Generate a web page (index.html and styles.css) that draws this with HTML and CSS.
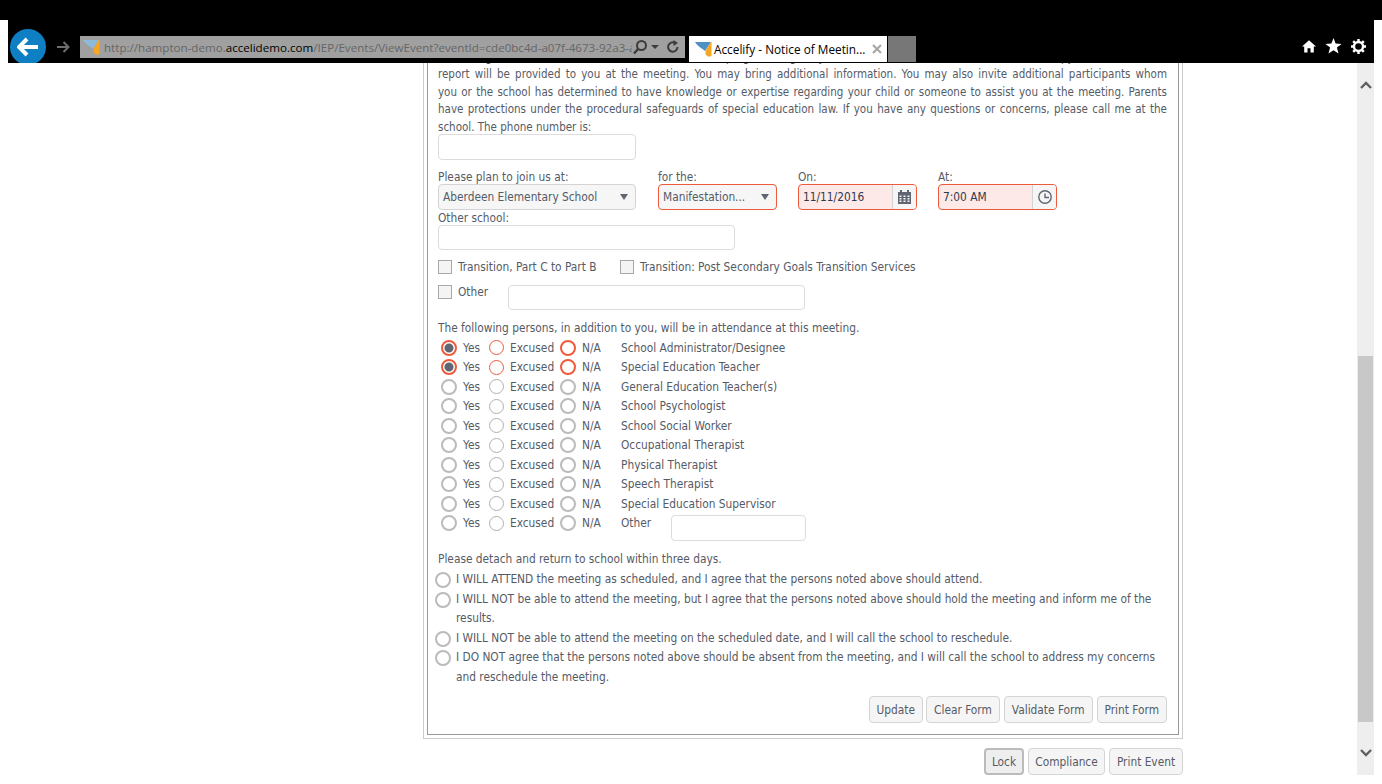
FILE: index.html
```html
<!DOCTYPE html>
<html>
<head>
	<meta charset="utf-8">
	<title>Accelify - Notice of Meeting</title>
	<link rel="stylesheet" href="styles.css">
</head>
<body>
	<div class="topstrip"></div>
	<div class="frame">
		<!-- browser toolbar -->
		<div class="toolbar">
			<div class="back">
				<svg width="22" height="20" viewBox="0 0 22 20"><path d="M10 2 L2 10 L10 18 M3 10 H21" fill="none" stroke="#fff" stroke-width="4"/></svg>
			</div>
			<svg class="forward" width="14" height="12" viewBox="0 0 14 12"><path d="M7.5 1 L12.5 6 L7.5 11 M12 6 H1" fill="none" stroke="#6e6e6e" stroke-width="2"/></svg>
			<div class="address">
				<svg class="favicon" width="17" height="17" viewBox="0 0 17 17"><path d="M0 1 H16 L10 10 C7 7 3 6 0 1 Z" fill="#8db9da"/><path d="M16.5 0 L16.5 15 C12 17 9 13 11 9 C12 7 14 4 16.5 0 Z" fill="#f5a623"/></svg>
				<span class="url">http://hampton-demo.<b>accelidemo.com</b>/IEP/Events/ViewEvent?eventId=cde0bc4d-a07f-4673-92a3-a</span>
				<svg class="addr-icon" width="16" height="16" viewBox="0 0 16 16"><circle cx="9.5" cy="6.5" r="4.5" fill="none" stroke="#3c3c3c" stroke-width="2"/><path d="M6 10 L2 14.5" stroke="#3c3c3c" stroke-width="2.4"/></svg>
				<span class="addr-caret"></span>
				<svg class="addr-icon" width="14" height="14" viewBox="0 0 14 14"><path d="M11.5 7 A4.7 4.7 0 1 1 8.5 2.6" fill="none" stroke="#3c3c3c" stroke-width="2"/><path d="M7.5 0 L12 3 L7.5 6 Z" fill="#3c3c3c"/></svg>
			</div>
			<div class="tab">
				<svg class="favicon" width="17" height="17" viewBox="0 0 17 17"><path d="M0 1 H16 L10 10 C7 7 3 6 0 1 Z" fill="#4e8fc4"/><path d="M16.5 0 L16.5 15 C12 17 9 13 11 9 C12 7 14 4 16.5 0 Z" fill="#f5a623"/></svg>
				<span class="tab-title">Accelify - Notice of Meetin...</span>
				<svg class="tab-close" width="10" height="10" viewBox="0 0 10 10"><path d="M1 1 L9 9 M9 1 L1 9" stroke="#a8a8a8" stroke-width="2.2"/></svg>
			</div>
			<div class="newtab"></div>
			<div class="tools">
				<svg width="14" height="14" viewBox="0 0 16 15"><path d="M8 1 L16 8 H13.5 V15 H9.7 V10 H6.3 V15 H2.5 V8 H0 Z" fill="#fff"/></svg>
				<svg width="17" height="16" viewBox="0 0 17 16"><path d="M8.5 0 L10.6 5.6 L16.6 5.9 L11.9 9.6 L13.5 15.5 L8.5 12.2 L3.5 15.5 L5.1 9.6 L0.4 5.9 L6.4 5.6 Z" fill="#fff"/></svg>
				<svg width="15" height="15" viewBox="0 0 15 15"><circle cx="7.5" cy="7.5" r="4.5" fill="none" stroke="#fff" stroke-width="2.4"/><path d="M7.5 0 V3 M7.5 12 V15 M0 7.5 H3 M12 7.5 H15 M2.2 2.2 L4.2 4.2 M10.8 10.8 L12.8 12.8 M12.8 2.2 L10.8 4.2 M4.2 10.8 L2.2 12.8" stroke="#fff" stroke-width="2.4"/></svg>
			</div>
		</div>

		<div class="viewport">
			<div class="main">
				<div class="outer">
					<div class="inner">
						<p class="notice">
							<span>A meeting has been scheduled to discuss educational programming for your child. If an evaluation has occurred, a copy of the evaluation</span>
							<span>report will be provided to you at the meeting. You may bring additional information. You may also invite additional participants whom</span>
							<span>you or the school has determined to have knowledge or expertise regarding your child or someone to assist you at the meeting. Parents</span>
							<span>have protections under the procedural safeguards of special education law. If you have any questions or concerns, please call me at the</span>
							<span class="last">school. The phone number is:</span>
						</p>
						<div class="input phone"></div>

						<!-- meeting details -->
						<div class="details">
							<div class="field f-school">
								<label>Please plan to join us at:</label>
								<div class="select"><span>Aberdeen Elementary School</span><i class="caret"></i></div>
							</div>
							<div class="field f-type">
								<label>for the:</label>
								<div class="select error"><span>Manifestation...</span><i class="caret"></i></div>
							</div>
							<div class="field f-date">
								<label>On:</label>
								<div class="picker error">
									<span class="value">11/11/2016</span>
									<span class="addon">
										<svg width="13" height="14" viewBox="0 0 13 14"><path d="M0 2 H13 V14 H0 Z" fill="#5f6672"/><path d="M3 0 V3 M10 0 V3" stroke="#5f6672" stroke-width="2"/><path d="M1.5 5.5 H3.5 V7 H1.5 Z M5.5 5.5 H7.5 V7 H5.5 Z M9.5 5.5 H11.5 V7 H9.5 Z M1.5 8 H3.5 V9.5 H1.5 Z M5.5 8 H7.5 V9.5 H5.5 Z M9.5 8 H11.5 V9.5 H9.5 Z M1.5 10.5 H3.5 V12 H1.5 Z M5.5 10.5 H7.5 V12 H5.5 Z M9.5 10.5 H11.5 V12 H9.5 Z" fill="#f5f5f5"/></svg>
									</span>
								</div>
							</div>
							<div class="field f-time">
								<label>At:</label>
								<div class="picker error">
									<span class="value">7:00 AM</span>
									<span class="addon">
										<svg width="14" height="14" viewBox="0 0 14 14"><circle cx="7" cy="7" r="6.2" fill="none" stroke="#5f6672" stroke-width="1.4"/><path d="M7 3.5 V7.5 H11" fill="none" stroke="#5f6672" stroke-width="1.4"/></svg>
									</span>
								</div>
							</div>
						</div>

						<label class="other-label">Other school:</label>
						<div class="input other-school"></div>

						<div class="checks">
							<i class="check"></i><span class="check-text first">Transition, Part C to Part B</span>
							<i class="check second"></i><span class="check-text">Transition: Post Secondary Goals Transition Services</span>
						</div>
						<div class="checks other-check">
							<i class="check"></i><span class="check-text short">Other</span>
							<div class="input other-text"></div>
						</div>

						<p class="lead">The following persons, in addition to you, will be in attendance at this meeting.</p>

						<!-- attendance -->
						<div class="attendance">
							<i class="radio error on"></i><span>Yes</span><i class="radio small error"></i><span>Excused</span><i class="radio error"></i><span>N/A</span><span>School Administrator/Designee</span>
							<i class="radio error on"></i><span>Yes</span><i class="radio small error"></i><span>Excused</span><i class="radio error"></i><span>N/A</span><span>Special Education Teacher</span>
							<i class="radio"></i><span>Yes</span><i class="radio small"></i><span>Excused</span><i class="radio"></i><span>N/A</span><span>General Education Teacher(s)</span>
							<i class="radio"></i><span>Yes</span><i class="radio small"></i><span>Excused</span><i class="radio"></i><span>N/A</span><span>School Psychologist</span>
							<i class="radio"></i><span>Yes</span><i class="radio small"></i><span>Excused</span><i class="radio"></i><span>N/A</span><span>School Social Worker</span>
							<i class="radio"></i><span>Yes</span><i class="radio small"></i><span>Excused</span><i class="radio"></i><span>N/A</span><span>Occupational Therapist</span>
							<i class="radio"></i><span>Yes</span><i class="radio small"></i><span>Excused</span><i class="radio"></i><span>N/A</span><span>Physical Therapist</span>
							<i class="radio"></i><span>Yes</span><i class="radio small"></i><span>Excused</span><i class="radio"></i><span>N/A</span><span>Speech Therapist</span>
							<i class="radio"></i><span>Yes</span><i class="radio small"></i><span>Excused</span><i class="radio"></i><span>N/A</span><span>Special Education Supervisor</span>
							<i class="radio"></i><span>Yes</span><i class="radio small"></i><span>Excused</span><i class="radio"></i><span>N/A</span><span class="role-other"><span class="role-name">Other</span><span class="input role-input"></span></span>
						</div>

						<p class="detach">Please detach and return to school within three days.</p>

						<div class="reply"><i class="radio"></i><span>I WILL ATTEND the meeting as scheduled, and I agree that the persons noted above should attend.</span></div>
						<div class="reply"><i class="radio"></i><span>I WILL NOT be able to attend the meeting, but I agree that the persons noted above should hold the meeting and inform me of the results.</span></div>
						<div class="reply"><i class="radio"></i><span>I WILL NOT be able to attend the meeting on the scheduled date, and I will call the school to reschedule.</span></div>
						<div class="reply"><i class="radio"></i><span>I DO NOT agree that the persons noted above should be absent from the meeting, and I will call the school to address my concerns and reschedule the meeting.</span></div>

						<div class="buttons form-buttons">
							<button>Update</button>
							<button>Clear Form</button>
							<button>Validate Form</button>
							<button>Print Form</button>
						</div>
					</div>
				</div>
				<div class="buttons event-buttons">
					<button class="focus">Lock</button>
					<button class="compliance">Compliance</button>
					<button class="print-event">Print Event</button>
				</div>
			</div>

			<!-- scrollbar -->
			<div class="scrollbar">
				<svg class="arrow-up" width="12" height="8" viewBox="0 0 12 8"><path d="M1 7 L6 2 L11 7" fill="none" stroke="#606060" stroke-width="2.4"/></svg>
				<div class="thumb"></div>
				<svg class="arrow-down" width="12" height="8" viewBox="0 0 12 8"><path d="M1 1 L6 6 L11 1" fill="none" stroke="#606060" stroke-width="2.4"/></svg>
			</div>
		</div>
	</div>
</body>
</html>
```

FILE: styles.css
```css
* {
	box-sizing: border-box;
}

body {
	margin: 0;
	background-color: #fff;
	font-family: "DejaVu Sans Condensed", "DejaVu Sans", sans-serif;
	font-stretch: condensed;
	font-size: 11.8px;
	color: #555b66;
	overflow: hidden;
}

.topstrip {
	height: 20px;
	background-color: #000;
}

.frame {
	margin: 0 8px;
}

/* browser toolbar */
.toolbar {
	height: 43px;
	background-color: #000;
	display: flex;
	align-items: flex-start;
	overflow: hidden;
	font-family: "Open Sans", sans-serif;
	font-stretch: normal;
	font-size: 11.6px;
}

.back {
	width: 36px;
	height: 36px;
	margin: 9px 0 0 2px;
	border-radius: 50%;
	background-color: #0f7fc4;
	display: flex;
	align-items: center;
	justify-content: center;
	flex: none;
}

.forward {
	margin: 21px 0 0 10px;
	flex: none;
}

.address {
	width: 605px;
	height: 22px;
	margin: 16px 0 0 10px;
	background-color: #a0a0a0;
	display: flex;
	align-items: center;
	color: #666;
	flex: none;
}

.favicon {
	margin-left: 3px;
	flex: none;
}

.url {
	width: 528px;
	margin-left: 4px;
	white-space: nowrap;
	overflow: hidden;
}

.url b {
	font-weight: normal;
	color: #000;
}

.addr-icon {
	flex: none;
}

.addr-caret {
	width: 0;
	height: 0;
	margin: 0 7px 0 3px;
	border-left: 4px solid transparent;
	border-right: 4px solid transparent;
	border-top: 4px solid #3c3c3c;
	flex: none;
}

.tab {
	width: 198px;
	height: 26px;
	margin: 16px 0 0 4px;
	background-color: #fff;
	color: #000;
	display: flex;
	align-items: center;
	padding-left: 3px;
	flex: none;
}

.tab-title {
	width: 158px;
	margin-left: 2px;
	font-size: 11.8px;
	white-space: nowrap;
}

.newtab {
	width: 28px;
	height: 26px;
	margin: 16px 0 0 1px;
	background-color: #777;
	flex: none;
}

.tools {
	margin: 18px 8px 0 auto;
	display: flex;
	align-items: center;
	gap: 9px;
}

/* page */
.viewport {
	height: 712px;
	display: flex;
	overflow: hidden;
}

.main {
	width: 1349px;
	padding-left: 415px;
	flex: none;
}

.outer {
	width: 760px;
	margin-top: -20px;
	padding: 3px;
	border: 1px solid #ccc;
	border-top: none;
}

.inner {
	height: 689px;
	padding: 3px 11px 0 10px;
	border: 1px solid #999;
	border-top: none;
}

.notice {
	margin: 0;
	font-size: 11.5px;
	line-height: 17.4px;
}

.notice span {
	display: block;
	text-align: justify;
	text-align-last: justify;
	white-space: nowrap;
}

.notice span.last {
	text-align-last: left;
}

.input {
	display: block;
	background-color: #fff;
	border: 1px solid #dcdcdc;
	border-radius: 4px;
}

.phone {
	width: 198px;
	height: 26px;
	margin-top: -2px;
}

.details {
	display: flex;
	margin-top: 10px;
}

.field label {
	display: block;
	line-height: 14px;
}

.f-school {
	width: 220px;
}

.f-type,
.f-date {
	width: 140px;
}

.select,
.picker {
	height: 26px;
	border: 1px solid #d4d4d4;
	border-radius: 4px;
	background-color: #f6f6f6;
	display: flex;
	align-items: center;
}

.select {
	padding: 0 7px 0 4px;
	justify-content: space-between;
}

.f-school .select {
	width: 198px;
}

.f-type .select,
.picker {
	width: 119px;
}

.caret {
	width: 0;
	height: 0;
	border-left: 4px solid transparent;
	border-right: 4px solid transparent;
	border-top: 6px solid #5f6672;
}

.select.error,
.picker.error {
	border-color: #ee5a3c;
}

.picker {
	background-color: #fde9e7;
	overflow: hidden;
}

.picker .value {
	flex: 1;
	padding-left: 4px;
	color: #2e3a4c;
}

.addon {
	width: 24px;
	height: 100%;
	background-color: #f5f5f5;
	border-left: 1px solid #d4d4d4;
	display: flex;
	align-items: center;
	justify-content: center;
}

.other-label {
	display: block;
	margin-top: 1px;
	line-height: 14px;
}

.other-school {
	width: 297px;
	height: 25px;
}

.checks {
	display: flex;
	align-items: center;
	margin-top: 10px;
	height: 14px;
}

.check {
	width: 14px;
	height: 14px;
	background-color: #f4f4f4;
	border: 1px solid #a8a8a8;
	flex: none;
}

.check-text {
	margin-left: 6px;
}

.check-text.first {
	width: 148px;
}

.check-text.short {
	width: 30px;
}

.check.second {
	margin-left: 14px;
}

.other-check {
	margin-top: 11px;
	align-items: flex-start;
	height: 25px;
}

.other-text {
	width: 297px;
	height: 25px;
	margin-left: 20px;
}

.lead {
	margin: 10px 0 0;
	line-height: 16px;
}

/* attendance grid */
.attendance {
	display: grid;
	grid-template-columns: 22px 25.5px 21.5px 50px 22px 39px 1fr;
	grid-auto-rows: 19.5px;
	align-items: center;
	margin: 2px 0 0 3px;
}

.radio {
	display: block;
	width: 16px;
	height: 16px;
	border: 2px solid #bbb;
	border-radius: 50%;
	background-color: #fff;
}

.radio.small {
	width: 15px;
	height: 15px;
	border-width: 1px;
	border-color: #b0b0b0;
}

.radio.error {
	border-color: #ee5a3c;
}

.radio.on {
	background: radial-gradient(circle, #5f6672 0, #5f6672 4px, #fff 5px);
}

.role-other {
	display: flex;
	align-items: flex-start;
	height: 15px;
}

.role-name {
	width: 30px;
}

.role-input {
	width: 135px;
	height: 26px;
	margin: -1px 0 0 20px;
	flex: none;
}

.detach {
	margin: 18px 0 0;
	line-height: 16px;
}

.reply {
	display: flex;
	align-items: flex-start;
	margin-left: -3px;
	line-height: 19.5px;
}

.reply .radio {
	margin-top: 2px;
	flex: none;
}

.reply span {
	padding-left: 5px;
	width: 712px;
}

.detach + .reply {
	margin-top: 3px;
}

/* buttons */
.buttons {
	display: flex;
	justify-content: flex-end;
}

.form-buttons {
	gap: 4px;
	margin-top: 9px;
}

.form-buttons button:first-child {
	margin-right: -1px;
}

.event-buttons {
	width: 760px;
	gap: 4px;
	margin-top: 9px;
}

button {
	height: 27px;
	padding: 0 7px;
	font: inherit;
	font-stretch: condensed;
	color: #555b66;
	background-color: #f5f5f5;
	border: 1px solid #d4d4d4;
	border-radius: 4px;
}

button.focus {
	width: 40px;
	padding: 0;
	border: 2px solid #bbb;
	background-color: #eee;
}

button.compliance {
	width: 77px;
	padding: 0;
}

button.print-event {
	width: 74px;
	padding: 0;
}

/* scrollbar */
.scrollbar {
	width: 17px;
	background-color: #eee;
	display: flex;
	flex-direction: column;
	align-items: center;
	flex: none;
}

.arrow-up {
	margin-top: 18px;
	flex: none;
}

.thumb {
	width: 15px;
	height: 366px;
	margin-top: 267px;
	background-color: #c8c8c8;
	flex: none;
}

.arrow-down {
	margin-top: 27px;
	flex: none;
}
```
